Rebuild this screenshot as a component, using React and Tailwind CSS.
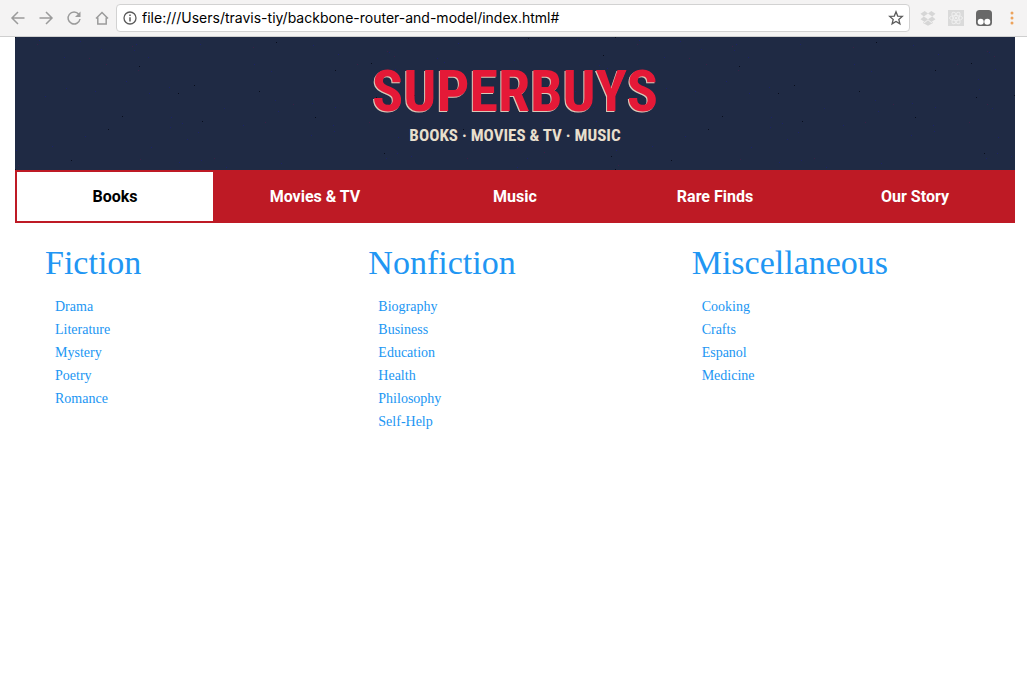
import React from "react";

const departments = ["Books", "Movies & TV", "Music", "Rare Finds", "Our Story"];

const categories = [
  { title: "Fiction", items: ["Drama", "Literature", "Mystery", "Poetry", "Romance"] },
  {
    title: "Nonfiction",
    items: ["Biography", "Business", "Education", "Health", "Philosophy", "Self-Help"],
  },
  { title: "Miscellaneous", items: ["Cooking", "Crafts", "Espanol", "Medicine"] },
];

// Pseudo-random but stable grain for the banner.
const tints = ["#080d1c", "#1c2266", "#1c2266", "#3a2045", "#1c2266"];
const specks = Array.from({ length: 120 }, (_, i) => ({
  x: (i * 197 + ((i * i * 31) % 89)) % 600,
  y: (i * 71 + ((i * i * 17) % 53)) % 132,
  fill: tints[i % tints.length],
}));

function Grain() {
  return (
    <svg aria-hidden="true" className="absolute inset-0 h-full w-full">
      <defs>
        <pattern id="grain" width="600" height="132" patternUnits="userSpaceOnUse">
          {specks.map((s, i) => (
            <rect key={i} x={s.x} y={s.y} width="1" height="1" fill={s.fill} />
          ))}
        </pattern>
      </defs>
      <rect width="100%" height="100%" fill="url(#grain)" />
    </svg>
  );
}

function ToolButton({ label, children, className = "text-[#9b9b9b]" }) {
  return (
    <button type="button" aria-label={label} className={`flex size-4 shrink-0 items-center justify-center ${className}`}>
      <svg
        viewBox="0 0 16 16"
        className="size-4"
        fill="none"
        stroke="currentColor"
        strokeWidth="1.5"
        aria-hidden="true"
      >
        {children}
      </svg>
    </button>
  );
}

function BrowserBar() {
  return (
    <header className="flex h-[37px] items-center border-b border-[#cfcfcf] bg-[#f4f3f3] pr-[7px] pl-2.5">
      <div className="flex gap-3">
        <ToolButton label="Back">
          <path d="M14.5 8H2M8 2 2 8l6 6" />
        </ToolButton>
        <ToolButton label="Forward">
          <path d="M1.500 8H14M8 2l6 6-6 6" />
        </ToolButton>
        <ToolButton label="Reload">
          <path d="M12.800 4.300A6 6 0 1 0 14 9" />
          <path d="M14.500 1.500V7H9z" fill="currentColor" stroke="none" />
        </ToolButton>
        <ToolButton label="Home">
          <path d="M2 8.500 8 2.500l6 6M3.800 7.500V14h8.400V7.500" />
        </ToolButton>
      </div>
      <div className="ml-1.5 flex h-7 min-w-0 flex-1 items-center gap-1 rounded border border-[#d2d2d2] bg-white px-[5px]">
        <svg viewBox="0 0 16 16" className="size-4 shrink-0 text-[#5a5a5a]" fill="none" stroke="currentColor" strokeWidth="1.3" aria-hidden="true">
          <circle cx="8" cy="8" r="6" />
          <path d="M8 7.200V11.400M8 4.600V6" strokeWidth="1.500" />
        </svg>
        <input
          type="text"
          aria-label="Address"
          defaultValue="file:///Users/travis-tiy/backbone-router-and-model/index.html#"
          className="min-w-0 flex-1 bg-transparent font-['Inter',sans-serif] text-sm text-black outline-none"
        />
        <ToolButton label="Bookmark this page" className="text-[#5a5a5a]">
          <path d="m8 1.800 1.700 4.300 4.600.3-3.500 3 1.100 4.500L8 11.500l-3.900 2.400 1.100-4.500-3.500-3 4.600-.3z" strokeWidth="1.300" />
        </ToolButton>
      </div>
      <div className="ml-2.5 flex gap-3">
        <ToolButton label="Dropbox" className="text-[#d6d6d6]">
          <g fill="currentColor" stroke="none">
            <path d="M4.700 1 8 3.600 3.800 6.400.5 3.800zM11.300 1 15.500 3.800 12.200 6.400 8 3.600zM3.800 6.400 8 9.200 4.700 12 .5 9.200zM12.200 6.400l3.300 2.800L11.300 12 8 9.200z" />
            <path d="m8 10.300 3.300 2.600 1.700-1v1.100L8 15.800 3 13v-1.100l1.700 1z" />
          </g>
        </ToolButton>
        <ToolButton label="React developer tools" className="text-[#efefef]">
          <rect width="16" height="16" fill="#dadada" stroke="none" />
          <g strokeWidth="1">
            <ellipse cx="8" cy="8" rx="6.500" ry="2.500" />
            <ellipse cx="8" cy="8" rx="6.500" ry="2.500" transform="rotate(60 8 8)" />
            <ellipse cx="8" cy="8" rx="6.500" ry="2.500" transform="rotate(120 8 8)" />
          </g>
          <circle cx="8" cy="8" r="1.300" fill="currentColor" stroke="none" />
        </ToolButton>
        <ToolButton label="User scripts" className="text-[#686868]">
          <rect width="16" height="16" rx="3.500" fill="currentColor" stroke="none" />
          <circle cx="4.700" cy="11.700" r="3" fill="#fff" stroke="none" />
          <circle cx="11.300" cy="11.700" r="3" fill="#fff" stroke="none" />
        </ToolButton>
        <ToolButton label="Menu" className="text-[#eda35c]">
          <g fill="currentColor" stroke="none">
            <circle cx="8" cy="3" r="1.500" />
            <circle cx="8" cy="8" r="1.500" />
            <circle cx="8" cy="13" r="1.500" />
          </g>
        </ToolButton>
      </div>
    </header>
  );
}

export default function App() {
  return (
    <div className="min-h-screen bg-white">
      <BrowserBar />
      <div className="pr-3 pl-[15px]">
        <div className="relative bg-[#1f2a44] pt-6 pb-5 text-center font-['Roboto_Condensed','Liberation_Sans_Narrow',sans-serif] font-bold">
          <Grain />
          <h1 className="relative text-[58px] leading-[60px] text-[#e51937] [text-shadow:-1px_1px_0_#d8c9b8]">
            SUPERBUYS
          </h1>
          <p className="relative text-[17px] leading-[29px] text-[#e8dfcd]">BOOKS · MOVIES &amp; TV · MUSIC</p>
        </div>
        <nav aria-label="Departments" className="grid grid-cols-5 bg-[#be1a25] font-['Roboto',sans-serif] text-base font-bold">
          {departments.map((name, i) => (
            <a
              key={name}
              href="#"
              aria-current={i === 0 ? "page" : undefined}
              className={`flex h-[53px] items-center justify-center border-2 border-[#be1a25] ${
                i === 0 ? "bg-white text-black" : "text-white"
              }`}
            >
              {name}
            </a>
          ))}
        </nav>
        <main className="grid grid-cols-3 pt-5 pl-[30px] font-['Liberation_Serif',serif] text-[#2196f3]">
          {categories.map((category) => (
            <section key={category.title}>
              <h2 className="text-[34px] leading-10">{category.title}</h2>
              <ul className="mt-3 pl-2.5 text-sm leading-[23px]">
                {category.items.map((item) => (
                  <li key={item}>
                    <a href="#">{item}</a>
                  </li>
                ))}
              </ul>
            </section>
          ))}
        </main>
      </div>
    </div>
  );
}
